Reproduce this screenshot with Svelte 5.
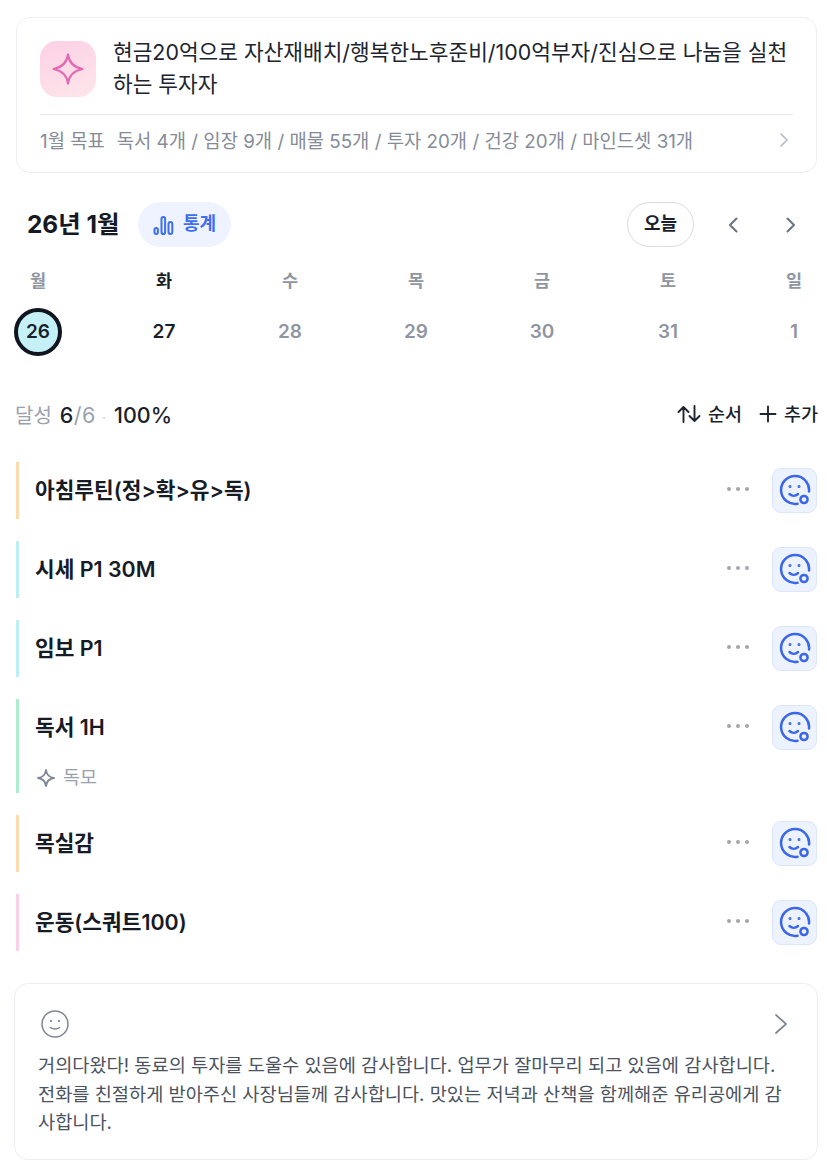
<script>
    const week = [
        { day: '월', date: 26, today: true },
        { day: '화', date: 27, active: true },
        { day: '수', date: 28 },
        { day: '목', date: 29 },
        { day: '금', date: 30 },
        { day: '토', date: 31 },
        { day: '일', date: 1 },
    ]

    const tasks = [
        { name: '아침루틴(정>확>유>독)', color: '#fdd9ae' },
        { name: '시세 P1 30M', color: '#bdeef3' },
        { name: '임보 P1', color: '#bdeef3' },
        { name: '독서 1H', color: '#aeeccf', sub: '독모' },
        { name: '목실감', color: '#fdd9ae' },
        { name: '운동(스쿼트100)', color: '#fbcfe6' },
    ]
</script>

<div class="page">
    <section class="goal">
        <div class="goal-top">
            <div class="goal-icon">
                <svg width="34" height="34" viewBox="0 0 34 34" fill="none">
                    <path d="M17 2.5C18 10.5 22 15 31.500 17C22 19 18 23.500 17 31.500C16 23.500 12 19 2.500 17C12 15 16 10.500 17 2.500Z" stroke="#df6cb0" stroke-width="2.200" stroke-linejoin="round"/>
                </svg>
            </div>
            <p class="goal-title">현금20억으로 자산재배치/행복한노후준비/100억부자/진심으로 나눔을 실천하는 투자자</p>
        </div>
        <div class="goal-foot">
            <span class="goal-text"><span class="goal-label">1월 목표</span>독서 4개 / 임장 9개 / 매물 55개 / 투자 20개 / 건강 20개 / 마인드셋 31개</span>
            <svg width="10" height="16" viewBox="0 0 10 16" fill="none"><path d="M2 2l6 6-6 6" stroke="#b4bac4" stroke-width="1.600" stroke-linecap="round" stroke-linejoin="round"/></svg>
        </div>
    </section>

    <header class="cal-head">
        <h1>26년 1월</h1>
        <button class="stats">
            <svg width="22" height="22" viewBox="0 0 22 22" fill="none" stroke="#3f6ff0" stroke-width="2">
                <rect x="1.500" y="14" width="3.400" height="6" rx="1.700"/>
                <rect x="8.500" y="3" width="3.600" height="17" rx="1.800"/>
                <rect x="15.500" y="8" width="3.800" height="12" rx="1.900"/>
            </svg>
            <span>통계</span>
        </button>
        <button class="today"><span>오늘</span></button>
        <button class="nav nav-prev" aria-label="이전">
            <svg width="12" height="18" viewBox="0 0 12 18" fill="none"><path d="M9.500 2.500L3 9l6.500 6.500" stroke="#6b7280" stroke-width="2" stroke-linecap="round" stroke-linejoin="round"/></svg>
        </button>
        <button class="nav nav-next" aria-label="다음">
            <svg width="12" height="18" viewBox="0 0 12 18" fill="none"><path d="M2.500 2.500L9 9l-6.500 6.500" stroke="#6b7280" stroke-width="2" stroke-linecap="round" stroke-linejoin="round"/></svg>
        </button>
    </header>

    <div class="week">
        {#each week as d}
            <div class="cell" class:active={d.active || d.today}>
                <span class="day" class:strong={d.active}>{d.day}</span>
                <span class="date" class:today-date={d.today}>{d.date}</span>
            </div>
        {/each}
    </div>

    <div class="progress">
        <div class="rate">
            <span class="muted label">달성</span><span class="ratio"><b>6</b><span class="muted">/6</span></span><span class="dot">·</span><b>100%</b>
        </div>
        <div class="actions">
            <button class="action">
                <svg width="24" height="20" viewBox="0 0 24 20" fill="none" stroke="#1f2430" stroke-width="1.900" stroke-linecap="round" stroke-linejoin="round"><path d="M6.500 18V3M1.500 8l5-5 5 5M17.500 2v15M12.500 12l5 5 5-5"/></svg>
                <span>순서</span>
            </button>
            <button class="action">
                <svg width="18" height="18" viewBox="0 0 18 18" fill="none" stroke="#1f2430" stroke-width="1.900" stroke-linecap="round"><path d="M9 1.500v15M1.500 9h15"/></svg>
                <span>추가</span>
            </button>
        </div>
    </div>

    <ul class="tasks">
        {#each tasks as t}
            <li class="task" style="border-left-color: {t.color}">
                <div class="task-row">
                    <span class="task-name">{t.name}</span>
                    <span class="more"><i></i><i></i><i></i></span>
                    <button class="mood" aria-label="기분">
                        <svg width="32" height="32" viewBox="0 0 32 32" fill="none" stroke="#3a66ea" stroke-width="2.500" stroke-linecap="round">
                            <path d="M18.500 29.800A14 14 0 1 1 30 17.500"/>
                            <circle cx="25" cy="25.500" r="3.600"/>
                            <path d="M10.500 20c2.500 2.300 6 2.300 8.500 0"/>
                            <circle cx="11" cy="12.500" r="0.600" stroke-width="1.800"/>
                            <circle cx="20" cy="12.500" r="0.600" stroke-width="1.800"/>
                        </svg>
                    </button>
                </div>
                {#if t.sub}
                    <div class="task-sub">
                        <svg width="20" height="20" viewBox="0 0 20 20" fill="none"><path d="M10 2c.6 4.800 3 7.300 8 8-5 .7-7.400 3.200-8 8-.6-4.800-3-7.300-8-8 5-.7 7.400-3.200 8-8z" stroke="#7f8794" stroke-width="1.900" stroke-linejoin="round"/></svg>
                        {t.sub}
                    </div>
                {/if}
            </li>
        {/each}
    </ul>

    <section class="journal">
        <div class="journal-top">
            <svg width="30" height="30" viewBox="0 0 30 30" fill="none" stroke="#7f8794" stroke-width="1.500" stroke-linecap="round">
                <circle cx="15" cy="15" r="13"/>
                <path d="M10.500 18.500c2.500 2 6.500 2 9 0"/>
                <circle cx="11" cy="12" r="0.400"/>
                <circle cx="19" cy="12" r="0.400"/>
            </svg>
            <svg width="14" height="22" viewBox="0 0 14 22" fill="none"><path d="M2 2l10 9-10 9" stroke="#7f8794" stroke-width="1.700" stroke-linecap="round" stroke-linejoin="round"/></svg>
        </div>
        <p>거의다왔다! 동료의 투자를 도울수 있음에 감사합니다. 업무가 잘마무리 되고 있음에 감사합니다. 전화를 친절하게 받아주신 사장님들께 감사합니다. 맛있는 저녁과 산책을 함께해준 유리공에게 감사합니다.</p>
    </section>
</div>

<style>
    :global(body) {
        background: #fff;
    }

    .page {
        width: 827px;
        height: 1170px;
        overflow: hidden;
        box-sizing: border-box;
        padding: 17px 9px 0 14px;
        font-family: Inter, "Noto Sans CJK KR", sans-serif;
        color: #1b1f2a;
    }

    button {
        font: inherit;
        background: none;
        border: 0;
        padding: 0;
        color: inherit;
    }

    p, h1, ul {
        margin: 0;
        padding: 0;
    }

    .goal {
        margin: 0 1px 0 2px;
        height: 156px;
        box-sizing: border-box;
        border: 1px solid #eceef1;
        border-radius: 14px;
        padding: 23px 23px 0;
    }

    .goal-top {
        display: flex;
        gap: 17px;
        height: 73px;
        border-bottom: 1px solid #e9ebee;
    }

    .goal-icon {
        width: 56px;
        height: 56px;
        flex: none;
        border-radius: 17px;
        background: linear-gradient(160deg, #fdd0e6, #fde6ea);
        display: flex;
        align-items: center;
        justify-content: center;
    }

    .goal-title {
        font-size: 21.4px;
        line-height: 32px;
        color: #20242e;
        margin-top: -5px;
    }

    .goal-foot {
        display: flex;
        align-items: center;
        justify-content: space-between;
        height: 50px;
        padding-right: 4px;
    }

    .goal-text {
        font-size: 18.8px;
        color: #858c98;
        margin-top: -2px;
    }

    .goal-label {
        margin-right: 12px;
    }

    .cal-head {
        display: flex;
        align-items: center;
        height: 45px;
        margin-top: 29px;
        padding-left: 13px;
    }

    h1 {
        font-size: 24.4px;
        font-weight: 700;
        color: #151923;
        width: 111px;
        padding-bottom: 5px;
    }

    .stats {
        display: flex;
        align-items: center;
        justify-content: center;
        gap: 8px;
        width: 93px;
        height: 45px;
        border-radius: 23px;
        background: #eef3ff;
        color: #3f6ff0;
        font-size: 18px;
        font-weight: 600;
    }

    .stats span,
    .today span {
        padding-bottom: 5px;
        display: block;
    }

    .today {
        margin-left: auto;
        width: 67px;
        height: 45px;
        border: 1px solid #d9dce3;
        border-radius: 23px;
        font-size: 18px;
        font-weight: 600;
    }

    .nav {
        display: flex;
        width: 12px;
    }

    .nav-prev {
        margin-left: 33px;
    }

    .nav-next {
        margin-left: 46px;
        margin-right: 21px;
    }

    .week {
        display: flex;
        justify-content: space-between;
        margin-top: 21px;
    }

    .cell {
        width: 48px;
        display: flex;
        flex-direction: column;
        align-items: center;
        gap: 14px;
        color: #8f96a2;
        font-weight: 600;
    }

    .day {
        font-size: 17.5px;
        line-height: 26px;
    }

    .strong {
        color: #1b1f2a;
    }

    .date {
        width: 48px;
        height: 48px;
        box-sizing: border-box;
        display: flex;
        align-items: center;
        justify-content: center;
        font-size: 19px;
        padding-bottom: 2px;
    }

    .active .date {
        color: #1b1f2a;
    }

    .today-date {
        background: #c4f0f6;
        border: 4px solid #10151f;
        border-radius: 50%;
    }

    .progress {
        display: flex;
        align-items: center;
        justify-content: space-between;
        height: 30px;
        margin-top: 43px;
        padding-left: 1px;
    }

    .rate {
        display: flex;
        align-items: baseline;
        font-size: 21.5px;
        color: #1b1f2a;
    }

    .rate b {
        font-weight: 500;
    }

    .label {
        font-size: 20px;
        margin-right: 8px;
    }

    .ratio {
        letter-spacing: 0.5px;
    }

    .muted {
        color: #9aa1ac;
    }

    .dot {
        color: #c4c8cf;
        font-size: 14px;
        margin: 0 8px 0 6px;
    }

    .actions {
        display: flex;
        gap: 17px;
    }

    .action {
        display: flex;
        align-items: center;
        gap: 7px;
        font-size: 18.5px;
        font-weight: 500;
    }

    .action span {
        padding-bottom: 3px;
    }

    .tasks {
        list-style: none;
        margin-top: 33px;
        margin-left: 2px;
        display: flex;
        flex-direction: column;
        gap: 22px;
    }

    .task {
        border-left: 3px solid;
        padding-left: 16px;
    }

    .task-row {
        display: flex;
        align-items: center;
        height: 57px;
        padding-right: 1px;
    }

    .task-name {
        flex: 1;
        font-size: 21.4px;
        font-weight: 600;
        color: #171b25;
        padding-bottom: 5px;
    }

    .more {
        display: flex;
        gap: 5px;
        margin-right: 23px;
        padding-bottom: 3px;
    }

    .more i {
        width: 4px;
        height: 4px;
        border-radius: 50%;
        background: #a0a6b0;
    }

    .mood {
        width: 45px;
        height: 45px;
        box-sizing: border-box;
        display: flex;
        align-items: center;
        justify-content: center;
        background: #edf2ff;
        border: 1px solid #dbe5fd;
        border-radius: 9px;
        margin-bottom: 1px;
    }

    .task-sub {
        display: flex;
        align-items: center;
        gap: 7px;
        height: 37px;
        font-size: 18.5px;
        color: #9aa1ac;
        padding-top: 3px;
        box-sizing: border-box;
    }

    .task-sub svg {
        margin: 3px 0 0 1px;
    }

    .journal {
        height: 177px;
        box-sizing: border-box;
        margin-top: 32px;
        border: 1px solid #eceef1;
        border-radius: 14px;
        padding: 25px 29px 0 23px;
    }

    .journal-top {
        display: flex;
        align-items: center;
        justify-content: space-between;
        height: 30px;
        padding-left: 2px;
    }

    .journal p {
        font-size: 18.65px;
        line-height: 28.5px;
        color: #4c5360;
        margin-top: 12px;
        margin-right: -5px;
    }
</style>
